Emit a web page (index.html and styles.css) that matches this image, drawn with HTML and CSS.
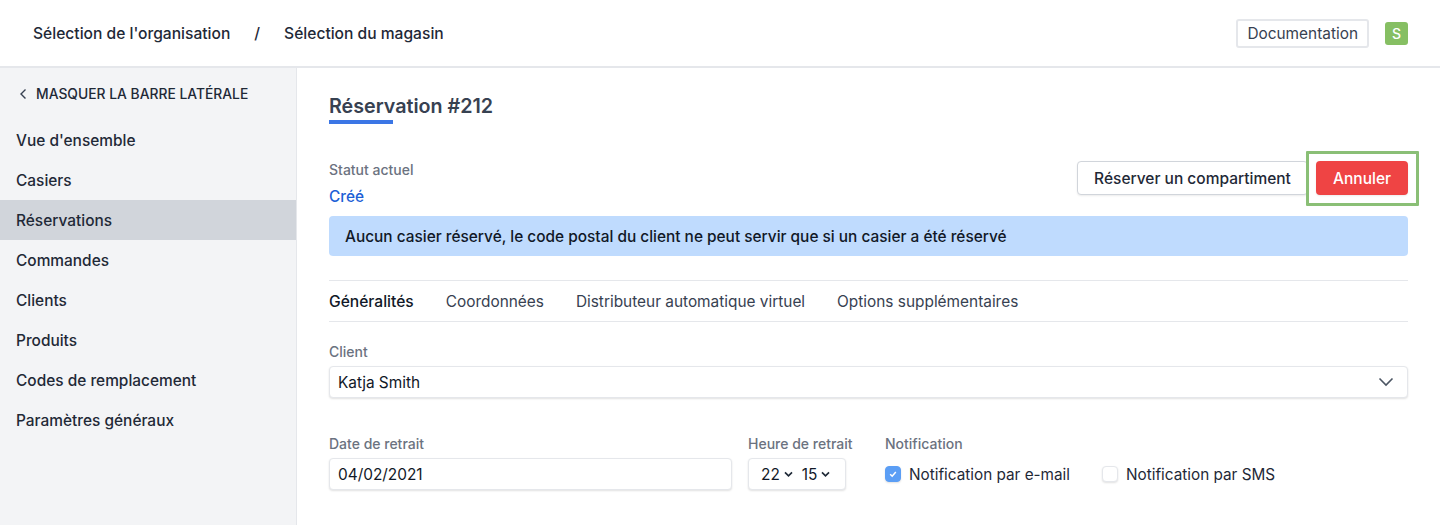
FILE: index.html
```html
<!DOCTYPE html>
<html lang="fr">
<head>
  <meta charset="UTF-8"/>
  <title>Réservation #212</title>
  <link rel="stylesheet" href="styles.css">
</head>
<body>
  <header class="topbar">
    <div class="crumbs">
      <span>Sélection de l'organisation</span>
      <span class="crumb-sep">/</span>
      <span>Sélection du magasin</span>
    </div>
    <div class="top-right">
      <a class="doc-link">Documentation</a>
      <span class="avatar">S</span>
    </div>
  </header>

  <div class="layout">
    <aside class="sidebar">
      <div class="hide-side">
        <svg class="hide-icon" viewBox="0 0 8 12" width="8" height="12"><path d="M6.5 1.5 2 6l4.5 4.5" fill="none" stroke="#374151" stroke-width="1.4"/></svg>
        <span>Masquer la barre latérale</span>
      </div>
      <nav class="nav">
        <a class="nav-item">Vue d'ensemble</a>
        <a class="nav-item">Casiers</a>
        <a class="nav-item active">Réservations</a>
        <a class="nav-item">Commandes</a>
        <a class="nav-item">Clients</a>
        <a class="nav-item">Produits</a>
        <a class="nav-item">Codes de remplacement</a>
        <a class="nav-item">Paramètres généraux</a>
      </nav>
    </aside>

    <main class="content">
      <h1 class="title">Réservation #212</h1>

      <div class="status-row">
        <div>
          <div class="label status-label">Statut actuel</div>
          <div class="status-val">Créé</div>
        </div>
        <div class="actions">
          <button class="btn btn-white">Réserver un compartiment</button>
          <button class="btn btn-red">Annuler<span class="highlight"></span></button>
        </div>
      </div>

      <div class="alert">Aucun casier réservé, le code postal du client ne peut servir que si un casier a été réservé</div>

      <div class="tabs">
        <a class="tab active">Généralités</a>
        <a class="tab">Coordonnées</a>
        <a class="tab">Distributeur automatique virtuel</a>
        <a class="tab">Options supplémentaires</a>
      </div>

      <div class="label field-label">Client</div>
      <div class="box client-box">
        <span>Katja Smith</span>
        <svg viewBox="0 0 16 10" width="16" height="10"><path d="M1.5 1.5 8 8l6.5-6.5" fill="none" stroke="#4b5563" stroke-width="1.6"/></svg>
      </div>

      <div class="form-row">
        <div class="col-date">
          <div class="label field-label">Date de retrait</div>
          <div class="box">04/02/2021</div>
        </div>
        <div class="col-time">
          <div class="label field-label">Heure de retrait</div>
          <div class="box time-box">
            <span>22</span>
            <svg viewBox="0 0 10 8" width="9" height="7"><path d="M1 1.5 5 5.5l4-4" fill="none" stroke="#1f2937" stroke-width="1.9"/></svg>
            <span class="time-min">15</span>
            <svg viewBox="0 0 10 8" width="9" height="7"><path d="M1 1.5 5 5.5l4-4" fill="none" stroke="#1f2937" stroke-width="1.9"/></svg>
          </div>
        </div>
        <div class="col-notif">
          <div class="label field-label">Notification</div>
          <div class="checks">
            <label class="check">
              <span class="cb on">
                <svg viewBox="0 0 10 10" width="10" height="10"><path d="M2.2 5.2 4.2 7.2 7.8 3" fill="none" stroke="#fff" stroke-width="1.5"/></svg>
              </span>
              Notification par e-mail
            </label>
            <label class="check">
              <span class="cb"></span>
              Notification par SMS
            </label>
          </div>
        </div>
      </div>
    </main>
  </div>
</body>
</html>
```

FILE: styles.css
```css
* { margin:0; padding:0; box-sizing:border-box }
html, body { height:100% }
body {
  overflow:hidden; background:#fff; color:#1f2937;
  font-family:Inter,"Liberation Sans",sans-serif; font-size:15.4px;
}

/* Top bar */
.topbar {
  height:68px; border-bottom:2px solid #e5e7eb;
  display:flex; align-items:center; justify-content:space-between;
  padding:0 32px 0 33px;
}
.crumbs { display:flex; font-weight:500; color:#1f2937; font-size:15.6px }
.crumb-sep { margin:0 24px }
.top-right { display:flex; align-items:center }
.doc-link {
  height:29px; padding:0 9px; display:flex; align-items:center;
  border:2px solid #e5e7eb; border-radius:3px; color:#374151; font-size:15.4px;
}
.avatar {
  width:23px; height:23px; margin-left:16px; border-radius:3px;
  background:#86bf63; color:#fff; font-size:14px; font-weight:500;
  display:flex; align-items:center; justify-content:center;
}

/* Sidebar */
.layout { display:flex; height:457px }
.sidebar { width:297px; background:#f3f4f6; border-right:1px solid #e5e7eb; flex:none }
.hide-side {
  display:flex; align-items:center; height:52px; padding-left:19px;
  text-transform:uppercase; font-size:13.85px; font-weight:500; color:#1f2937;
}
.hide-icon { margin-right:9px }
.nav-item {
  display:flex; align-items:center; height:40px; padding-left:16px;
  font-weight:500; font-size:15.45px; color:#1f2937;
}
.nav-item.active { background:#d1d5db }

/* Content */
.content { flex:1; padding:27px 32px 0; min-width:0 }
.title {
  font-size:19.7px; line-height:22px; font-weight:600; color:#374151;
  position:relative; height:30px;
}
.title::after {
  content:""; position:absolute; left:0; bottom:1px;
  width:64px; height:4px; background:#3b76e5;
}
.status-row { display:flex; justify-content:space-between; margin-top:36px; height:45px }
.label { font-size:14px; font-weight:500; color:#6b7280; line-height:20px }
.status-label { margin-top:-1px }
.status-val { color:#1d5fd6; font-size:15.4px; font-weight:500; line-height:20px; margin-top:7px }
.actions { display:flex; gap:8px; align-items:flex-start }
.btn {
  height:34px; border-radius:4px; font:500 15.5px Inter,"Liberation Sans",sans-serif;
  cursor:pointer; box-shadow:0 1px 2px rgba(0,0,0,.08);
}
.btn-white { width:231px; background:#fff; border:1px solid #d1d5db; color:#1f2937 }
.btn-red { width:92px; background:#ef4444; border:none; color:#fff; position:relative }
/* green marker drawn over the screenshot */
.highlight {
  position:absolute; left:-10px; top:-10px; width:113px; height:55px;
  border:3px solid #8abf76; border-radius:1px;
}
.alert {
  height:40px; margin-top:10px; padding-left:16px; display:flex; align-items:center;
  background:#bfdbfe; border-radius:4px; font-weight:500; font-size:15.42px; color:#111827;
}
.tabs {
  display:flex; gap:32px; height:42px; margin-top:24px; align-items:center;
  border-top:1px solid #e5e7eb; border-bottom:1px solid #e5e7eb;
  color:#374151; font-size:15.4px;
}
.tab.active { color:#111827; font-weight:500; font-size:15.6px }
.field-label { height:20px; margin-bottom:4px }
.tabs + .field-label { margin-top:20px }
.box {
  height:32px; display:flex; align-items:center; padding:0 8px;
  border:1px solid #e5e7eb; border-radius:4px; background:#fff;
  box-shadow:0 1px 2px rgba(0,0,0,.12); color:#111827; font-size:15.4px;
}
.client-box { justify-content:space-between; padding-right:13px }
.form-row { display:flex; margin-top:36px }
.col-date { width:403px; margin-right:16px }
.col-time { width:121px; margin-right:16px }
.time-box { width:98px; padding:0 12px; gap:4px }
.time-min { margin-left:5px }
.checks { display:flex; gap:32px; height:32px; align-items:center }
.check { display:flex; align-items:center; color:#1f2937; font-size:15.3px }
.cb {
  width:16px; height:16px; margin-right:8px; border-radius:4px;
  border:1px solid #e5e7eb; background:#fff; box-shadow:0 1px 2px rgba(0,0,0,.12);
  display:flex; align-items:center; justify-content:center;
}
.cb.on { background:#5b9ef5; border-color:#5b9ef5 }
```
